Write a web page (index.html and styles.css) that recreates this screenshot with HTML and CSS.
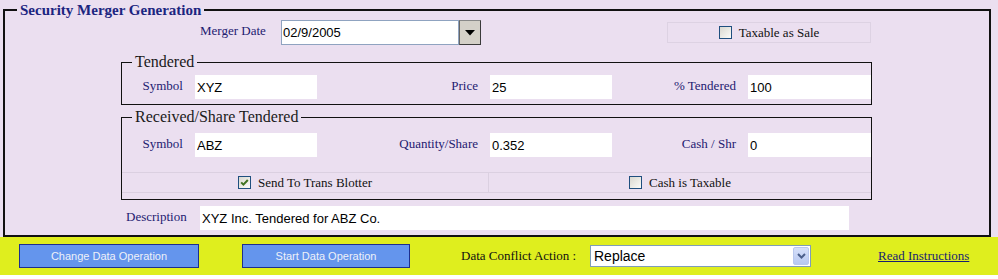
FILE: index.html
```html
<!DOCTYPE html>
<html lang="en">
<head>
  <meta charset="UTF-8">
  <title>Security Merger Generation</title>
  <link rel="stylesheet" href="styles.css">
</head>
<body>

<div class="page">
  <fieldset class="merger">
    <legend>Security Merger Generation</legend>

    <div class="date-row">
      <label class="row-label">Merger Date</label>
      <div class="date-combo">
        <input class="date-input" type="text" value="02/9/2005">
        <span class="date-btn">
          <svg width="10" height="6" viewBox="0 0 10 6"><polygon points="0,0 10,0 5,5.5" fill="#000"/></svg>
        </span>
      </div>
      <div class="taxable">
        <span class="check"></span>Taxable as Sale
      </div>
    </div>

    <fieldset class="group">
      <legend>Tendered</legend>
      <div class="field-grid">
        <label>Symbol</label><input type="text" value="XYZ">
        <label>Price</label><input type="text" value="25">
        <label>% Tendered</label><input type="text" value="100">
      </div>
    </fieldset>

    <fieldset class="group received">
      <legend>Received/Share Tendered</legend>
      <div class="field-grid">
        <label>Symbol</label><input type="text" value="ABZ">
        <label>Quantity/Share</label><input type="text" value="0.352">
        <label>Cash / Shr</label><input type="text" value="0">
      </div>
      <div class="check-row">
        <div class="check-cell">
          <span class="check checked">
            <svg width="11" height="11" viewBox="0 0 11 11"><path d="M2.2 5.4 L4.4 7.6 L8.8 3" fill="none" stroke="#3f7320" stroke-width="2"/></svg>
          </span>Send To Trans Blotter
        </div>
        <div class="check-cell">
          <span class="check"></span>Cash is Taxable
        </div>
      </div>
    </fieldset>

    <div class="desc-row">
      <label class="row-label">Description</label>
      <input class="desc-input" type="text" value="XYZ Inc. Tendered for ABZ Co.">
    </div>
  </fieldset>

  <div class="actions">
    <button class="op-btn change">Change Data Operation</button>
    <button class="op-btn start">Start Data Operation</button>
    <span class="conflict-label">Data Conflict Action :</span>
    <div class="combo">
      <span class="combo-text">Replace</span>
      <span class="combo-arrow">
        <svg width="9" height="6" viewBox="0 0 9 6"><path d="M1 1 L4.5 4.5 L8 1" fill="none" stroke="#4b5f8c" stroke-width="2"/></svg>
      </span>
    </div>
    <a class="help-link" href="#">Read Instructions</a>
  </div>
</div>

</body>
</html>
```

FILE: styles.css
```css
body {
  margin: 0;
  background-color: #fff;
  font-family: "Liberation Serif", "Times New Roman", serif;
}
.page {
  width: 998px;
  background-color: #ebdff0;
  padding-top: 1px;
}
fieldset {
  margin: 0;
  min-width: 0;
}
input {
  box-sizing: border-box;
  height: 24px;
  border: none;
  padding: 0 2px;
  background-color: #fff;
  font-family: "Liberation Sans", Arial, sans-serif;
  font-size: 13px;
  color: #000;
  outline: none;
}

/* outer panel */
.merger {
  margin: 0 7px 0 3px;
  padding: 1px 0 5px 0;
  border: 2px solid #111;
}
.merger > legend {
  margin-left: 12px;
  padding: 0 3px;
  font-size: 15px;
  line-height: 18px;
  font-weight: bold;
  color: #1c2580;
}
.row-label {
  font-size: 13px;
  line-height: 15px;
  color: #1e2070;
  padding-top: 3px;
}

/* merger date row */
.date-row {
  display: flex;
  align-items: flex-start;
  height: 25px;
}
.date-row .row-label {
  margin-left: 195px;
  width: 81px;
}
.date-combo {
  display: flex;
}
.date-input {
  width: 178px;
  height: 25px;
  border: 1px solid #8fa3c0;
  padding-left: 1px;
}
.date-btn {
  box-sizing: border-box;
  width: 22px;
  height: 25px;
  display: flex;
  align-items: center;
  justify-content: center;
  background-color: #d4d0c8;
  border: 1px solid #3a3a3a;
  border-top-color: #888;
  border-left-color: #666;
}
.taxable {
  box-sizing: border-box;
  margin: 2px 0 0 186px;
  width: 204px;
  height: 21px;
  border: 1px solid #ddd2e3;
  display: flex;
  align-items: center;
  justify-content: center;
  gap: 7px;
  font-size: 13px;
  color: #111;
}

/* checkbox */
.check {
  box-sizing: border-box;
  width: 13px;
  height: 13px;
  border: 1px solid #1f4f7f;
  background: linear-gradient(135deg, #d9d8d0, #fbfbf8);
  display: flex;
  align-items: center;
  justify-content: center;
}

/* tendered / received groups */
.group {
  box-sizing: border-box;
  width: 751px;
  margin: 8px 0 0 116px;
  padding: 4px 0 5px 0;
  border: 1px solid #111;
}
.group > legend {
  margin-left: 10px;
  padding: 0 3px;
  font-size: 16px;
  line-height: 18px;
  color: #1a1a1a;
}
.received {
  margin-top: 3px;
  padding: 7px 0 6px 0;
}
.field-grid {
  display: grid;
  grid-template-columns: 73px 122px 173px 122px 136px 123px;
  align-items: start;
}
.field-grid label {
  text-align: right;
  padding: 3px 12px 0 0;
  font-size: 13px;
  line-height: 15px;
  color: #1e2070;
}
.field-grid input {
  width: 100%;
}
.check-row {
  display: grid;
  grid-template-columns: 366px 1fr;
  margin-top: 15px;
  height: 21px;
  box-sizing: border-box;
  border-top: 1px solid #dbd0e1;
  border-bottom: 1px solid #dbd0e1;
}
.check-cell {
  display: flex;
  align-items: center;
  justify-content: center;
  gap: 7px;
  font-size: 13px;
  color: #111;
}
.check-cell + .check-cell {
  border-left: 1px solid #dbd0e1;
}

/* description */
.desc-row {
  display: flex;
  align-items: flex-start;
  margin-top: 6px;
}
.desc-row .row-label {
  margin-left: 121px;
  width: 74px;
}
.desc-input {
  width: 649px;
}

/* bottom action band */
.actions {
  height: 38px;
  background-color: #dfee1e;
  display: flex;
  align-items: center;
  padding-left: 19px;
}
.op-btn {
  height: 24px;
  background-color: #6495ed;
  border: 1px solid #1d2f8e;
  color: #eef1f8;
  font-family: "Liberation Sans", Arial, sans-serif;
  font-size: 11px;
  padding: 0;
}
.change {
  width: 180px;
}
.start {
  width: 168px;
  margin-left: 43px;
}
.conflict-label {
  margin-left: 51px;
  width: 129px;
  font-size: 13px;
  color: #111;
}
.combo {
  box-sizing: border-box;
  width: 221px;
  height: 22px;
  border: 1px solid #7f9db9;
  background-color: #fff;
  display: flex;
  align-items: center;
  justify-content: space-between;
}
.combo-text {
  padding-left: 3px;
  font-family: "Liberation Sans", Arial, sans-serif;
  font-size: 14px;
  color: #000;
}
.combo-arrow {
  box-sizing: border-box;
  width: 16px;
  height: 18px;
  margin-right: 1px;
  display: flex;
  align-items: center;
  justify-content: center;
  background: linear-gradient(#d6e0fa, #b8c9f2);
  border: 1px solid #b9c8ee;
  border-radius: 2px;
}
.help-link {
  margin-left: 67px;
  font-size: 13px;
  color: #1a1f70;
  text-decoration: underline;
}
```
